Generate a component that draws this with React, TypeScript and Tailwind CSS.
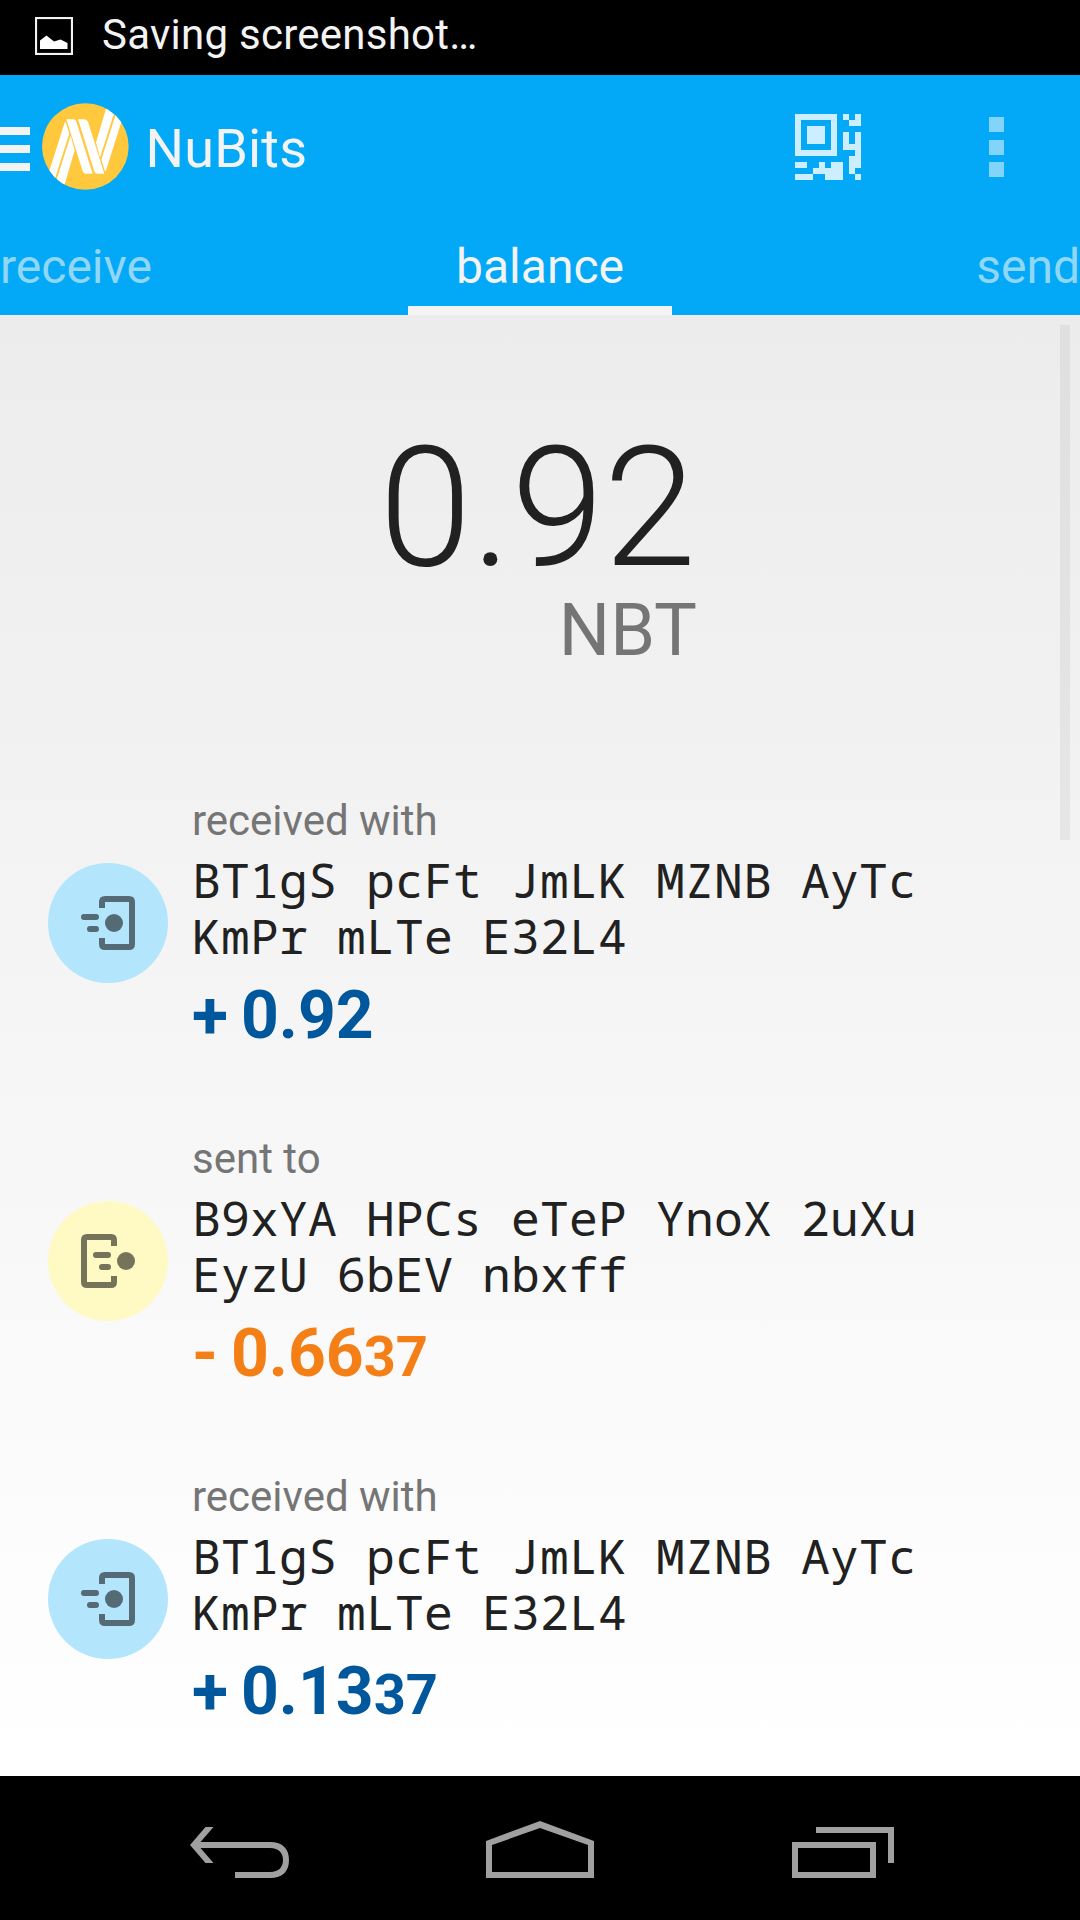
type Transaction = {
  id: number
  type: 'received' | 'sent'
  address: string[]
  amount: string
  fraction?: string
}

const TRANSACTIONS: Transaction[] = [
  { id: 1, type: 'received', address: ['BT1gS pcFt JmLK MZNB AyTc', 'KmPr mLTe E32L4'], amount: '0.92' },
  { id: 2, type: 'sent', address: ['B9xYA HPCs eTeP YnoX 2uXu', 'EyzU 6bEV nbxff'], amount: '0.66', fraction: '37' },
  { id: 3, type: 'received', address: ['BT1gS pcFt JmLK MZNB AyTc', 'KmPr mLTe E32L4'], amount: '0.13', fraction: '37' },
]

function PictureIcon() {
  return (
    <svg width="38" height="38" viewBox="0 0 38 38">
      <rect x="1" y="1" width="36" height="36" fill="none" stroke="#f3f3f3" strokeWidth="2.2" />
      <path d="M5 23.5L11.5 18.5L19 24.5L25.5 22.5L32.5 26V32H5Z" fill="#fff" />
    </svg>
  )
}

function NuLogo() {
  return (
    <svg width="87" height="87" viewBox="35 38.5 261 261">
      <clipPath id="coin">
        <circle cx="165" cy="169" r="130" />
      </clipPath>
      <circle cx="165" cy="169" r="130" fill="#ffc83d" />
      <g clipPath="url(#coin)" fill="#fff">
        <path d="M102 100Q104 92 107 98L117 130L71 274L47 274Z" />
        <path d="M121 136L133 181L99 296H70Z" />
        <path d="M228 238Q226 246 223 240L213 208L259 64L283 64Z" />
        <path d="M209 202L197 157L231 42H260Z" />
        <path d="M108 87H129Q136 87 138 94L187 251H170Q160 251 157 243Z" />
        <path d="M222 251H201Q194 251 192 244L143 87H160Q170 87 173 95Z" />
      </g>
    </svg>
  )
}

function QrIcon() {
  return (
    <svg width="66" height="66" viewBox="0 0 11 11" fill="#cdeefe" shapeRendering="crispEdges">
      <path fillRule="evenodd" d="M0 0H7V7H0ZM1 1V6H6V1Z" />
      <path d="M2 2H5V5H2Z" />
      <path d="M8 0H9V1H8ZM10 0H11V2H9V1H10Z" />
      <path d="M8 3H9V5H10V3H11V9H10V10H9V7H10V6H8Z" />
      <path d="M10 10H11V11H10Z" />
      <path d="M0 8H2V9H0ZM0 10H3V11H0ZM3 9H4V8H5V9H6V8H8V11H5V10H3Z" />
    </svg>
  )
}

function ReceivedIcon() {
  return (
    <svg width="120" height="120" viewBox="0 0 120 120">
      <path
        d="M54 45V39Q54 36 57 36H81Q84 36 84 39V81Q84 84 81 84H57Q54 84 54 81V75"
        fill="none"
        stroke="#546a74"
        strokeWidth="6"
      />
      <circle cx="66" cy="60" r="9" fill="#546a74" />
      <path d="M36 54H48M42 66H48" stroke="#546a74" strokeWidth="6" strokeLinecap="round" />
    </svg>
  )
}

function SentIcon() {
  return (
    <svg width="120" height="120" viewBox="0 0 120 120">
      <path
        d="M66 45V39Q66 36 63 36H39Q36 36 36 39V81Q36 84 39 84H63Q66 84 66 81V75"
        fill="none"
        stroke="#75735a"
        strokeWidth="6"
      />
      <circle cx="78" cy="60" r="9" fill="#75735a" />
      <path d="M48 54H60M54 66H60" stroke="#75735a" strokeWidth="6" strokeLinecap="round" />
    </svg>
  )
}

function StatusBar() {
  return (
    <div className="flex h-[75px] items-start bg-black pl-[35px] text-[#f3f3f3]">
      <div className="mt-[17px]">
        <PictureIcon />
      </div>
      <span className="mt-[10px] ml-[29px] text-[42px] leading-[50px] tracking-[0.25px]">Saving screenshot…</span>
    </div>
  )
}

function ActionBar() {
  return (
    <header className="bg-[#03a9f6] text-[#f3f3f3]">
      <div className="flex h-36 items-center">
        <div className="flex w-[30px] flex-col gap-[10px] pt-1">
          <div className="h-2 bg-[#f3f3f3]" />
          <div className="h-2 bg-[#f3f3f3]" />
          <div className="h-2 bg-[#f3f3f3]" />
        </div>
        <div className="ml-[11.5px] pb-[2px]">
          <NuLogo />
        </div>
        <h1 className="ml-[17px] pt-1 text-[54px] leading-[64px] tracking-[0.2px]">NuBits</h1>
        <button className="ml-auto">
          <QrIcon />
        </button>
        <button className="mr-[76px] ml-32 flex flex-col gap-[7.5px]">
          <span className="size-[15px] bg-[#82d4fb]" />
          <span className="size-[15px] bg-[#82d4fb]" />
          <span className="size-[15px] bg-[#82d4fb]" />
        </button>
      </div>
      <nav className="grid h-24 grid-cols-[408px_264px_408px] text-[48px] leading-[56px]">
        <span className="pt-5 text-[#90d6f5]">receive</span>
        <span className="border-b-[9px] border-[#f3f3f3] pt-5 text-center">balance</span>
        <span className="pt-5 text-right text-[#90d6f5]">send</span>
      </nav>
    </header>
  )
}

function TransactionRow({ tx }: { tx: Transaction }) {
  const received = tx.type === 'received'
  return (
    <li className="flex h-[338px] items-start pl-12">
      <div className={`mt-[67px] size-[120px] rounded-full ${received ? 'bg-[#b3e5fc]' : 'bg-[#fff9c4]'}`}>
        {received ? <ReceivedIcon /> : <SentIcon />}
      </div>
      <div className="ml-6">
        <p className="text-[42px] leading-[50px] text-[#757575]">{received ? 'received with' : 'sent to'}</p>
        <div className="mt-[6px] font-['Droid_Sans_Mono','Noto_Sans_Mono','DejaVu_Sans_Mono',monospace] text-[48px] leading-[56px] tracking-[0.2px] whitespace-pre text-[#212121]">
          {tx.address.map((line) => (
            <p key={line}>{line}</p>
          ))}
        </div>
        <p
          className={`mt-[13px] text-[66px] leading-[78px] font-bold [word-spacing:-3.5px] ${
            received ? 'text-[#01579b]' : 'text-[#f57f17]'
          }`}
        >
          {received ? '+' : '-'} {tx.amount}
          {tx.fraction && <span className="text-[56px] leading-none">{tx.fraction}</span>}
        </p>
      </div>
    </li>
  )
}

function NavigationBar() {
  return (
    <footer className="flex h-36 items-start bg-black pt-[45px] pl-[190px]">
      <svg width="100" height="57" viewBox="0 0 100 57" fill="none">
        <path d="M0 24L15.5 6H23.5L10.5 21H80C93 21 99 28 99 39S93 57 80 57H45V51H80C89 51 93 46 93 39S89 27 80 27H10.5L23.5 42H15.5Z" fill="#a0a0a0" />
      </svg>
      <svg className="ml-[196px]" width="108" height="57" viewBox="0 0 108 57">
        <path fillRule="evenodd" d="M0 20L54 0L108 20V57H0ZM6 24V51H102V24L54 7Z" fill="#a0a0a0" />
      </svg>
      <svg className="ml-[198px]" width="102" height="57" viewBox="0 0 102 57">
        <path fillRule="evenodd" d="M0 21H84V57H0ZM6 27V51H78V27ZM24 6H102V42H96V12H24Z" fill="#a0a0a0" />
      </svg>
    </footer>
  )
}

export default function App() {
  return (
    <div className="flex h-[1920px] w-[1080px] flex-col overflow-hidden font-[Roboto,sans-serif]">
      <StatusBar />
      <ActionBar />
      <main className="relative h-[1461px] overflow-hidden bg-linear-to-b from-[#ececec] to-white">
        <section className="mx-auto mt-[93px] flex w-[340px] flex-col pr-[13px] pl-[9px]">
          <p className="text-[167px] leading-[200px] font-light tracking-[-0.2px] text-[#212121]">0.92</p>
          <p className="-mt-[19px] self-end text-[72px] leading-[84px] text-[#757575]">NBT</p>
        </section>
        <ul className="mt-[123px]">
          {TRANSACTIONS.map((tx) => (
            <TransactionRow key={tx.id} tx={tx} />
          ))}
        </ul>
        {/* scroll thumb */}
        <div className="absolute top-[10px] right-[10px] h-[515px] w-[10px] bg-black/5" />
      </main>
      <NavigationBar />
    </div>
  )
}
